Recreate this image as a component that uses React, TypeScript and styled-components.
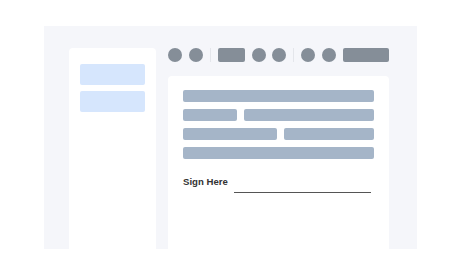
import React from 'react';
import styled, { createGlobalStyle } from 'styled-components';

const GlobalStyle = createGlobalStyle`
  html, body {
    margin: 0;
    padding: 0;
    background: #ffffff;
    font-family: "Liberation Sans", Arial, sans-serif;
  }
`;

const Page = styled.div`
  padding: 26px 0 0 44px;
`;

const Frame = styled.div`
  width: 373px;
  height: 223px;
  box-sizing: border-box;
  padding: 22px 28px 0 25px;
  background: #f5f6fa;
  display: flex;
  gap: 12px;
  overflow: hidden;
`;

const Sidebar = styled.div`
  width: 87px;
  box-sizing: border-box;
  padding: 16px 11px;
  background: #ffffff;
  border-radius: 4px 4px 0 0;
  display: flex;
  flex-direction: column;
  gap: 6px;
`;

const NavItem = styled.div`
  height: 21px;
  border-radius: 2px;
  background: #d6e6fd;
`;

const Main = styled.div`
  flex: 1;
  display: flex;
  flex-direction: column;
  gap: 14px;
`;

const Toolbar = styled.div`
  height: 14px;
  display: flex;
  align-items: center;
  justify-content: space-between;
`;

const Dot = styled.div`
  width: 14px;
  height: 14px;
  border-radius: 50%;
  background: #858e98;
`;

const Pill = styled.div<{ $w: number }>`
  width: ${(p) => p.$w}px;
  height: 14px;
  border-radius: 2px;
  background: #858e98;
`;

const Divider = styled.div`
  width: 1px;
  height: 14px;
  background: #e4e6eb;
`;

const Card = styled.div`
  flex: 1;
  background: #ffffff;
  border-radius: 4px 4px 0 0;
  padding: 14px 15px 0;
  display: flex;
  flex-direction: column;
  gap: 7px;
`;

const Row = styled.div<{ $cols?: string }>`
  display: grid;
  grid-template-columns: ${(p) => p.$cols || '1fr'};
  gap: 7px;
`;

const Bar = styled.div`
  height: 12px;
  border-radius: 2px;
  background: #a5b5c8;
`;

const SignRow = styled.div`
  margin-top: 10px;
  display: flex;
  align-items: flex-end;
  padding-right: 3px;
`;

const SignLabel = styled.span`
  width: 51px;
  font-size: 9.6px;
  font-weight: 700;
  color: #333333;
  line-height: 11px;
`;

const SignLine = styled.div`
  flex: 1;
  height: 0;
  border-bottom: 1px solid #555555;
  margin-bottom: -6px;
`;

export default function App() {
  return (
    <>
      <GlobalStyle />
      <Page>
        <Frame>
          <Sidebar>
            <NavItem />
            <NavItem />
          </Sidebar>
          <Main>
            <Toolbar>
              <Dot />
              <Dot />
              <Divider />
              <Pill $w={27} />
              <Dot />
              <Dot />
              <Divider />
              <Dot />
              <Dot />
              <Pill $w={46} />
            </Toolbar>
            <Card>
              <Row>
                <Bar />
              </Row>
              <Row $cols="54px 1fr">
                <Bar />
                <Bar />
              </Row>
              <Row $cols="94px 1fr">
                <Bar />
                <Bar />
              </Row>
              <Row>
                <Bar />
              </Row>
              <SignRow>
                <SignLabel>Sign Here</SignLabel>
                <SignLine />
              </SignRow>
            </Card>
          </Main>
        </Frame>
      </Page>
    </>
  );
}
